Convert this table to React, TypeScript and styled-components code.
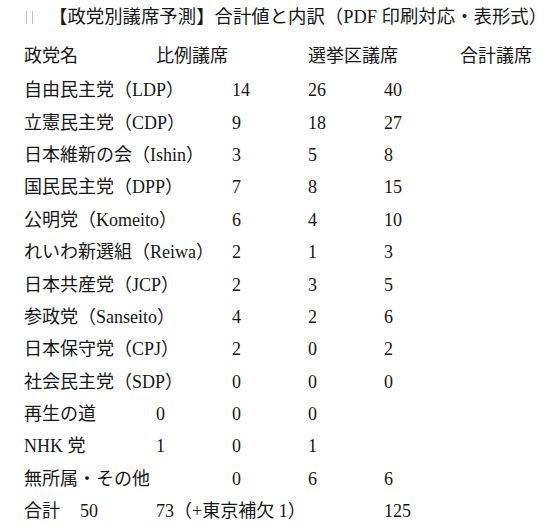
import styled, { createGlobalStyle } from 'styled-components';

const GlobalStyle = createGlobalStyle`
    html, body {
        margin: 0;
        padding: 0;
        background: #ffffff;
    }
    body {
        font-family: "Liberation Serif", "Noto Sans CJK JP", serif;
        color: #161616;
    }
`;

const Page = styled.div`
    width: 553px;
    height: 532px;
    overflow: hidden;
    font-size: 18px;
`;

const Title = styled.div`
    display: flex;
    align-items: center;
    height: 38px;
    padding-left: 26px;
    padding-bottom: 4px;
    box-sizing: border-box;
    font-size: 18.4px;
    line-height: 32px;
    white-space: nowrap;
`;

const TitleMark = styled.span`
    display: inline-flex;
    gap: 5px;
    margin-right: 16px;
    > span {
        width: 1px;
        height: 13px;
        background: #c4c4c4;
    }
`;

const Row = styled.div<{ $height?: number }>`
    display: grid;
    grid-template-columns: repeat(7, 76px);
    padding-left: 4px;
    height: ${(p) => p.$height ?? 32.4}px;
    align-items: center;
    line-height: 1;
    white-space: nowrap;
`;

const Cell = styled.span<{ $col: number; $span?: number }>`
    grid-column: ${(p) => p.$col} / span ${(p) => p.$span ?? 1};
    padding-left: ${(p) => (p.$col === 1 ? 20 : 0)}px;
`;

type Entry = { text: string; col: number; span?: number };

const header: Entry[] = [
    { text: '政党名', col: 1, span: 2 },
    { text: '比例議席', col: 3, span: 2 },
    { text: '選挙区議席', col: 5, span: 2 },
    { text: '合計議席', col: 7 },
];

// 各行: 政党名と、タブで揃えた数値の列位置
const rows: Entry[][] = [
    [{ text: '自由民主党（LDP）', col: 1, span: 3 }, { text: '14', col: 4 }, { text: '26', col: 5 }, { text: '40', col: 6 }],
    [{ text: '立憲民主党（CDP）', col: 1, span: 3 }, { text: '9', col: 4 }, { text: '18', col: 5 }, { text: '27', col: 6 }],
    [{ text: '日本維新の会（Ishin）', col: 1, span: 3 }, { text: '3', col: 4 }, { text: '5', col: 5 }, { text: '8', col: 6 }],
    [{ text: '国民民主党（DPP）', col: 1, span: 3 }, { text: '7', col: 4 }, { text: '8', col: 5 }, { text: '15', col: 6 }],
    [{ text: '公明党（Komeito）', col: 1, span: 3 }, { text: '6', col: 4 }, { text: '4', col: 5 }, { text: '10', col: 6 }],
    [{ text: 'れいわ新選組（Reiwa）', col: 1, span: 3 }, { text: '2', col: 4 }, { text: '1', col: 5 }, { text: '3', col: 6 }],
    [{ text: '日本共産党（JCP）', col: 1, span: 3 }, { text: '2', col: 4 }, { text: '3', col: 5 }, { text: '5', col: 6 }],
    [{ text: '参政党（Sanseito）', col: 1, span: 3 }, { text: '4', col: 4 }, { text: '2', col: 5 }, { text: '6', col: 6 }],
    [{ text: '日本保守党（CPJ）', col: 1, span: 3 }, { text: '2', col: 4 }, { text: '0', col: 5 }, { text: '2', col: 6 }],
    [{ text: '社会民主党（SDP）', col: 1, span: 3 }, { text: '0', col: 4 }, { text: '0', col: 5 }, { text: '0', col: 6 }],
    [{ text: '再生の道', col: 1, span: 2 }, { text: '0', col: 3 }, { text: '0', col: 4 }, { text: '0', col: 5 }],
    [{ text: 'NHK 党', col: 1, span: 2 }, { text: '1', col: 3 }, { text: '0', col: 4 }, { text: '1', col: 5 }],
    [{ text: '無所属・その他', col: 1, span: 3 }, { text: '0', col: 4 }, { text: '6', col: 5 }, { text: '6', col: 6 }],
    [{ text: '合計', col: 1 }, { text: '50', col: 2 }, { text: '73（+東京補欠 1）', col: 3, span: 3 }, { text: '125', col: 6 }],
];

export default function App() {
    return (
        <Page>
            <GlobalStyle />
            <Title>
                <TitleMark>
                    <span />
                    <span />
                </TitleMark>
                【政党別議席予測】合計値と内訳（PDF 印刷対応・表形式）
            </Title>
            <Row $height={36}>
                {header.map((c) => (
                    <Cell key={c.text} $col={c.col} $span={c.span}>
                        {c.text}
                    </Cell>
                ))}
            </Row>
            {rows.map((r, i) => (
                <Row key={i}>
                    {r.map((c, j) => (
                        <Cell key={j} $col={c.col} $span={c.span}>
                            {c.text}
                        </Cell>
                    ))}
                </Row>
            ))}
        </Page>
    );
}
